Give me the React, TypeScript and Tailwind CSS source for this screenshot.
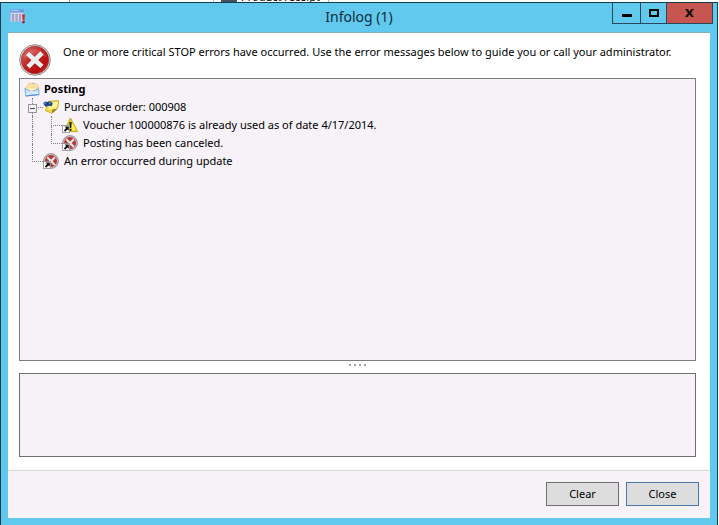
import type { ReactNode } from "react";

type Guide = "line" | "tee" | "corner";

interface LogEntry {
  text: string;
  icon: ReactNode;
  guides: Guide[];
  bold?: boolean;
  expandable?: boolean;
}

function WindowIcon() {
  return (
    <svg width="16" height="16" viewBox="0 0 16 16" aria-hidden="true">
      <rect x="0.5" y="1.5" width="13" height="11" fill="#c9d3ee" stroke="#a9bde4" />
      <rect x="0" y="0.5" width="14" height="3" fill="#6c9be0" />
      <rect x="1" y="1" width="8" height="1" fill="#a9cbf5" />
      <path d="M3 5v7M6.5 5v7M10 5v7" stroke="#a79fc6" strokeWidth="2" />
      <path d="M12 5.5h3l-.6 5.5h-1.8z" fill="#d32a2c" />
      <circle cx="13.5" cy="13" r="1.4" fill="#9e2430" />
    </svg>
  );
}

function StopIcon() {
  return (
    <svg width="32" height="32" viewBox="0 0 32 32" className="shrink-0" aria-hidden="true">
      <defs>
        <linearGradient id="stop" x1="0" y1="0" x2="1" y2="1">
          <stop offset="0" stopColor="#dd7772" />
          <stop offset="0.45" stopColor="#c02224" />
          <stop offset="0.75" stopColor="#b80d11" />
          <stop offset="1" stopColor="#e24a3e" />
        </linearGradient>
      </defs>
      <circle cx="16" cy="16" r="15.3" fill="#e4dfdf" stroke="#8e8585" strokeWidth="1" />
      <circle cx="16" cy="16" r="13.7" fill="url(#stop)" stroke="#9b2a2c" strokeWidth="0.7" />
      <path d="M5 14a11.5 11.5 0 0 1 22-1Q16 10 5 14z" fill="#fff" opacity="0.15" />
      <path d="M9 10l14 13M23 10L9 23" stroke="#7d1214" strokeWidth="5.4" opacity="0.4" />
      <path d="M8.5 9.5l14.5 13M23 9L9 22.8" stroke="#f1eeee" strokeWidth="4.6" />
    </svg>
  );
}

function ShortcutArrow() {
  return (
    <g>
      <rect x="0.5" y="8.5" width="7" height="7" fill="#fff" stroke="#8c8c8c" strokeWidth="0.8" />
      <path d="M2.6 9.6h4.2v4.2l-1.4-1.4-2.2 2.4-1.3-1.2L4 11z" fill="#111" />
    </g>
  );
}

function MailIcon() {
  return (
    <svg width="16" height="16" viewBox="0 0 16 16" aria-hidden="true">
      <path d="M1.5 7L9 1.5l6 4.5v8H1.5z" fill="#7fb4e6" />
      <path d="M2 6.5L5 2.5l8 .8 1.5 3.2-1 3.5H3z" fill="#fff1bd" stroke="#edbb5c" strokeWidth="0.8" />
      <path d="M4.2 4.8l8.6.4M3.6 6.6l9.6.3" stroke="#f5d084" strokeWidth="0.9" />
      <path d="M.8 7.5L8 10.8l6.5-3.3.7 6L1.8 15z" fill="#c8e3fa" stroke="#6aa5de" strokeWidth="0.8" />
      <path d="M2 14.4l4.5-4.2 8.2 3" stroke="#f4fbff" strokeWidth="1" fill="none" />
      <path d="M1.8 15l13.4-1.4" stroke="#3f84c8" strokeWidth="0.9" />
    </svg>
  );
}

function NoteIcon() {
  return (
    <svg width="16" height="16" viewBox="0 0 16 16" aria-hidden="true">
      <path d="M5 2.5L15.6 1.5c0 4-.3 6-1.6 8.5L9 14.3l-6.5-2.5z" fill="#f0d64c" stroke="#c4a52c" strokeWidth="0.8" />
      <path d="M8 4l6.8-1.4c-.2 3-.8 5-2 6.4L5 10.5z" fill="#fff49a" />
      <path d="M14 10L9 14.3l.4-3.6z" fill="#8f7518" />
      <path d="M0 4.5l2-2 2.8.6L7.2 2l2.6 2.4-1.2 2.8-2.5-.4L2.6 7.8z" fill="#1e4a86" />
      <path d="M1.3 4.6l1.5-1M6.2 4.4l1.3-.9" stroke="#8ebdf0" strokeWidth="1.1" />
    </svg>
  );
}

function WarningIcon() {
  return (
    <svg width="16" height="16" viewBox="0 0 16 16" aria-hidden="true">
      <path d="M8.5 1L15.5 14.5H2z" fill="#efd51c" stroke="#b9a218" strokeWidth="0.9" strokeLinejoin="round" />
      <path d="M9.5 4.5L14 13.5H9.5z" fill="#fff04a" />
      <path d="M7.3 5h2.4L9.2 11H7.8z" fill="#222" />
      <circle cx="8.6" cy="12.8" r="1.1" fill="#222" />
      <ShortcutArrow />
    </svg>
  );
}

function ErrorIcon() {
  return (
    <svg width="16" height="16" viewBox="0 0 16 16" aria-hidden="true">
      <circle cx="8" cy="8" r="7.4" fill="#c9bcbc" stroke="#8f8080" strokeWidth="0.8" />
      <circle cx="8" cy="8" r="6" fill="#b33a3a" />
      <path d="M4.3 4.3l7.6 7.6M11.9 4.3l-7.4 7.4" stroke="#efe8e8" strokeWidth="2.1" />
      <ShortcutArrow />
    </svg>
  );
}

const entries: LogEntry[] = [
  { text: "Posting", icon: <MailIcon />, guides: [], bold: true },
  { text: "Purchase order: 000908", icon: <NoteIcon />, guides: ["tee"], expandable: true },
  { text: "Voucher 100000876 is already used as of date 4/17/2014.", icon: <WarningIcon />, guides: ["line", "tee"] },
  { text: "Posting has been canceled.", icon: <ErrorIcon />, guides: ["line", "corner"] },
  { text: "An error occurred during update", icon: <ErrorIcon />, guides: ["corner"] },
];

function GuideCell({ kind, expandable }: { kind: Guide; expandable?: boolean }) {
  return (
    <span className="relative flex h-full w-[19px] shrink-0 flex-col pl-2">
      <span
        className={
          kind === "line"
            ? "h-[10px] border-l border-dotted border-[#808080]"
            : "h-[10px] border-b border-l border-dotted border-[#808080]"
        }
      />
      {kind !== "corner" && <span className="h-2 border-l border-dotted border-[#808080]" />}
      {expandable && (
        <button
          type="button"
          aria-label="Collapse"
          className="absolute top-[6px] left-1 flex h-[9px] w-[9px] items-center justify-center border border-[#969696] bg-[#f3f1f3]"
        >
          <span className="h-px w-[5px] bg-[#3f4a78]" />
        </button>
      )}
    </span>
  );
}

function TreeRow({ entry }: { entry: LogEntry }) {
  return (
    <li className="flex h-[18px] items-center">
      {entry.guides.map((kind, i) => (
        <GuideCell key={i} kind={kind} expandable={entry.expandable} />
      ))}
      <span className="w-4 shrink-0">{entry.icon}</span>
      <span className={entry.bold ? "pl-1 font-bold" : "pl-[5px]"}>{entry.text}</span>
    </li>
  );
}

export default function App() {
  return (
    <div className="flex min-h-screen flex-col bg-white font-['Noto_Sans','Open_Sans',sans-serif] text-[11px] leading-4 text-black">
      {/* sliver of the form behind the dialog */}
      <div className="flex h-[2px] items-end overflow-hidden">
        <span className="h-full w-[70px] border-r border-[#9a9a9a]" />
        <span className="h-full w-36 border-r border-[#b5b5b5]" />
        <span className="ml-[7px] h-full w-4 bg-[#3f5566]" />
        <span className="w-[92px] border-r border-[#b5b5b5] pl-1 leading-[10px] whitespace-nowrap">Product receipt</span>
      </div>

      <div className="mr-px flex flex-1 flex-col border-x border-t border-[#173c4d] bg-[#62c9ee] px-[7px] pb-[7px]">
        <header className="-mr-[3px] flex h-[29px] items-start">
          <div className="w-[98px] pt-[6px] pl-[2px]">
            <WindowIcon />
          </div>
          <h1 className="flex-1 pt-1 text-center text-[14px] leading-5 text-[#0d2c3a]">Infolog (1)</h1>
          <div className="flex h-[21px] border-x border-b border-[#27475a]">
            <button type="button" aria-label="Minimize" className="flex w-7 items-center justify-center border-r border-[#27475a]">
              <span className="mt-1 h-[3px] w-[10px] bg-black" />
            </button>
            <button type="button" aria-label="Maximize" className="flex w-[26px] items-center justify-center border-r border-[#27475a]">
              <span className="h-2 w-[10px] border-2 border-black" />
            </button>
            <button type="button" aria-label="Close window" className="flex w-[45px] items-center justify-center bg-[#c75650]">
              <svg width="9" height="8" viewBox="0 0 9 8" aria-hidden="true">
                <path d="M0 0h2.7l1.8 2.4L6.3 0H9L6 4l3 4H6.3L4.5 5.6 2.7 8H0l3-4z" fill="#111" />
              </svg>
            </button>
          </div>
        </header>

        <main className="flex flex-1 flex-col border-t border-[#87aebd] bg-white px-[11px] pt-[11px] pb-[13px]">
          <div className="flex h-[34px] items-start">
            <StopIcon />
            <p className="pl-3">
              One or more critical STOP errors have occurred. Use the error messages below to guide you or call your
              administrator.
            </p>
          </div>

          <ul className="mr-[3px] flex-1 border border-[#7d7d80] bg-[#f6f2f7] pt-px pl-1">
            {entries.map((entry) => (
              <TreeRow key={entry.text} entry={entry} />
            ))}
          </ul>

          <div className="mr-1 flex h-3 justify-center gap-[3px] pt-[3px]">
            <span className="h-[2px] w-[2px] bg-[#a3a3a3]" />
            <span className="h-[2px] w-[2px] bg-[#a3a3a3]" />
            <span className="h-[2px] w-[2px] bg-[#a3a3a3]" />
            <span className="h-[2px] w-[2px] bg-[#a3a3a3]" />
          </div>

          <textarea
            readOnly
            aria-label="Message details"
            className="mr-[3px] block h-[84px] resize-none border border-[#6f6f72] bg-[#f6f2f7] outline-none"
          />
        </main>

        <footer className="flex h-12 items-start justify-end gap-[7px] border-t border-[#d6d9dc] bg-[#f6f2f7] pt-[11px] pr-[11px]">
          <button type="button" className="h-6 w-[73px] border border-[#707070] bg-[#dddddd]">
            Clear
          </button>
          <button type="button" className="h-6 w-[73px] border border-[#4a78a8] bg-[#dddddd]">
            Close
          </button>
        </footer>
      </div>
    </div>
  );
}
